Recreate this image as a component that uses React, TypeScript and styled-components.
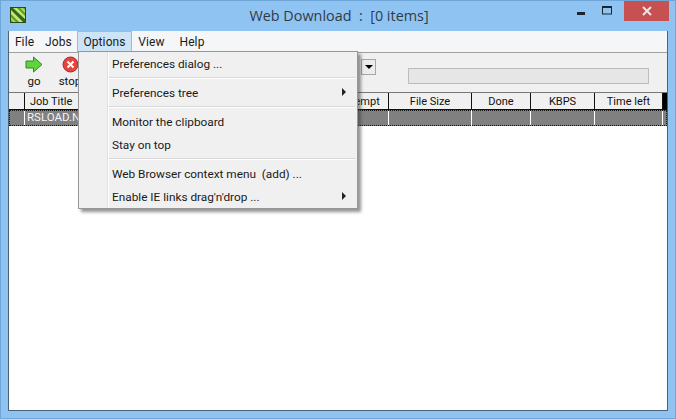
import React from "react";
import styled, { createGlobalStyle } from "styled-components";

const Global = createGlobalStyle`
  html, body { margin: 0; padding: 0; width: 676px; height: 419px; overflow: hidden; }
  body { font-family: "Liberation Sans", Arial, sans-serif; font-size: 12px; color: #000; }
`;
const Frame = styled.div`
  position: relative; width: 676px; height: 419px; box-sizing: border-box; background: #8fc4f2;
  border: 1px solid #6ea6d8; display: flex; flex-direction: column; overflow: hidden;
`;
const TitleBar = styled.div`
  height: 30px; display: flex; align-items: flex-start; flex: none; position: relative;
`;
const AppIcon = styled.svg`
  width: 16px; height: 16px; margin: 6px 0 0 9px; flex: none;
`;
const Title = styled.div`
  position: absolute; left: 2px; right: 0; top: 7px; text-align: center; font-family: "Open Sans", sans-serif;
  font-size: 14.4px; color: #2f3c48; white-space: pre; line-height: 16px;
`;
const WinControls = styled.div`
  margin-left: auto; display: flex; align-items: flex-start; height: 20px; margin-right: 6px;
  position: relative;
`;
const WinBtn = styled.div`
  width: 26px; height: 20px; display: flex; align-items: center; justify-content: center;
`;
const CloseBtn = styled.div`
  width: 45px; height: 20px; background: #c75050; display: flex; align-items: center; justify-content: center;
  margin-left: 4px;
`;
const Client = styled.div`
  flex: none; margin: 0 7px; height: 380px; background: #fff; display: flex; flex-direction: column;
  border: 1px solid #4d6478; border-top: none; box-sizing: border-box;
`;
const MenuBar = styled.div`
  height: 21px; background: #f5f6f7; display: flex; align-items: stretch; flex: none;
  border-bottom: 1px solid #a0a0a0; box-sizing: content-box;
`;
const MenuItem = styled.div<{ $active?: boolean; $w: number }>`
  width: ${p => p.$w}px; display: flex; align-items: center; justify-content: center; box-sizing: border-box;
  font-family: Roboto, sans-serif; font-size: 12px; letter-spacing: 0.1px; color: #1a1a1a;
  ${p => p.$active ? "background: #cde4f7; border: 1px solid #92c0e0;" : ""}
`;
const Toolbar = styled.div`
  height: 39px; background: #f0f0f0; display: flex; flex: none; position: relative; align-items: flex-start;
  padding-left: 7px; box-sizing: border-box;
`;
const ToolBtn = styled.div`
  width: 36px; display: flex; flex-direction: column; align-items: center; padding-top: 3px;
  font-family: Roboto, sans-serif; font-size: 11.5px; line-height: 14px; color: #111;
  svg { display: block; margin-bottom: 1px; }
`;
const Combo = styled.div`
  width: 15px; height: 16px; margin: 6px 0 0 273px; border: 1px solid #a6a6a6; background: #ececec; box-sizing: border-box;
  display: flex; align-items: center; justify-content: center; flex: none;
`;
const ComboArrow = styled.div`
  width: 0; height: 0; border-left: 4px solid transparent; border-right: 4px solid transparent; border-top: 4px solid #000;
`;
const Progress = styled.div`
  width: 241px; height: 16px; margin: 15px 0 0 32px; background: #e6e6e6; border: 1px solid #bcbcbc; box-sizing: border-box; flex: none;
`;
const Columns = "16px 307px 57px 83px 59px 64px 68px 1fr";
const Header = styled.div`
  display: grid; grid-template-columns: ${Columns}; height: 18px; flex: none; background: #f0f0f0;
  border-top: 1px solid #777; box-sizing: border-box;
`;
const HeadCell = styled.div<{ $left?: boolean }>`
  border-right: 1px solid #111; border-bottom: 1px solid #111; display: flex; align-items: center;
  justify-content: ${p => p.$left ? "flex-start" : "center"}; ${p => p.$left ? "padding-left: 5px;" : ""}
  font-family: Roboto, sans-serif; font-size: 11px; color: #111; overflow: hidden; white-space: nowrap;
`;
const HeadEnd = styled.div`
  background: #000;
`;
const Row = styled.div`
  display: grid; grid-template-columns: ${Columns}; height: 16px; flex: none; background: #808080;
  outline: 1px dotted #111; outline-offset: -1px;
`;
const RowCell = styled.div`
  border-right: 1px solid #fff; color: #f4f4f4; font-family: Roboto, sans-serif; font-size: 11.5px; line-height: 15px;
  padding-left: 2px; overflow: hidden; white-space: nowrap;
`;
const RowEnd = styled.div``;
const Menu = styled.div`
  position: absolute; left: 77px; top: 50px; width: 280px; height: 158px; box-sizing: border-box;
  background: #f0f0f0; border: 1px solid #979797; box-shadow: 3px 3px 3px rgba(60,60,60,.55);
  display: flex; flex-direction: column; z-index: 5;
  &::before { content: ""; position: absolute; left: 28px; top: 0; bottom: 0; width: 1px; background: #e0e0e0; border-right: 1px solid #fff; }
`;
const MItem = styled.div`
  height: 23px; flex: none; display: flex; align-items: center; padding-left: 33px; position: relative;
  font-family: Roboto, sans-serif; font-size: 11.8px; color: #1a1a1a; white-space: pre;
`;
const Sep = styled.div`
  height: 1px; margin: 2px 2px 2px 30px; background: #d7d7d7; border-bottom: 1px solid #fff; flex: none;
`;
const Arrow = styled.div`
  position: absolute; right: 11px; top: 7px; width: 0; height: 0;
  border-top: 4px solid transparent; border-bottom: 4px solid transparent; border-left: 4px solid #222;
`;

export default function App() {
  return (
    <Frame>
      <Global />
      <TitleBar>
        <AppIcon viewBox="0 0 16 16">
          <rect width="16" height="16" fill="#5c9e1e" />
          <path d="M0 3 L3 0 H6 L16 10 V13 L13 16 H10 L0 6Z" fill="#c4e67a" />
          <path d="M0 0 H2 L16 13 V16 H14 L0 2Z" fill="#2f6b10" />
          <path d="M9 0 H12 L16 4 V7Z" fill="#a6d95a" />
          <path d="M0 9 L7 16 H4 L0 12Z" fill="#a6d95a" />
          <rect x=".5" y=".5" width="15" height="15" fill="none" stroke="#2d4a18" />
        </AppIcon>
        <Title>Web Download  :  [0 items]</Title>
        <WinControls>
          <WinBtn>
            <svg width="10" height="10" viewBox="0 0 10 10"><rect x="1" y="6" width="8" height="3" fill="#1c2630" /></svg>
          </WinBtn>
          <WinBtn>
            <svg width="11" height="10" viewBox="0 0 11 10"><rect x=".5" y="1" width="9" height="7" fill="none" stroke="#1c2630" /><rect x="0" y="0" width="10" height="2" fill="#1c2630" /></svg>
          </WinBtn>
          <CloseBtn>
            <svg width="10" height="10" viewBox="0 0 10 10"><path d="M1 1 L9 9 M9 1 L1 9" stroke="#f4e4e4" strokeWidth="2" /></svg>
          </CloseBtn>
        </WinControls>
      </TitleBar>
      <Client>
        <MenuBar>
          <MenuItem $w={31}>File</MenuItem>
          <MenuItem $w={37}>Jobs</MenuItem>
          <MenuItem $w={55} $active>Options</MenuItem>
          <MenuItem $w={39}>View</MenuItem>
          <MenuItem $w={42}>Help</MenuItem>
        </MenuBar>
        <Toolbar>
          <ToolBtn>
            <svg width="18" height="17" viewBox="0 0 18 17">
              <path d="M1 5 H8.5 V1 L17 8.5 L8.5 16 V12 H1Z" fill="#5fd43c" stroke="#2f8a2a" strokeLinejoin="round" />
            </svg>
            go
          </ToolBtn>
          <ToolBtn>
            <svg width="17" height="17" viewBox="0 0 17 17">
              <circle cx="8.5" cy="8.5" r="7.5" fill="#e5453a" stroke="#a52a2a" />
              <path d="M5.5 5.5 L11.5 11.5 M11.5 5.5 L5.5 11.5" stroke="#fff" strokeWidth="2" />
            </svg>
            stop
          </ToolBtn>
          <Combo><ComboArrow /></Combo>
          <Progress />
        </Toolbar>
        <Header>
          <HeadCell />
          <HeadCell $left>Job Title</HeadCell>
          <HeadCell>Attempt</HeadCell>
          <HeadCell>File Size</HeadCell>
          <HeadCell>Done</HeadCell>
          <HeadCell>KBPS</HeadCell>
          <HeadCell>Time left</HeadCell>
          <HeadEnd />
        </Header>
        <Row>
          <RowCell />
          <RowCell>RSLOAD.NET</RowCell>
          <RowCell />
          <RowCell />
          <RowCell />
          <RowCell />
          <RowCell />
          <RowEnd />
        </Row>
      </Client>
      <Menu>
        <MItem>Preferences dialog ...</MItem>
        <Sep />
        <MItem>Preferences tree<Arrow /></MItem>
        <Sep />
        <MItem>Monitor the clipboard</MItem>
        <MItem>Stay on top</MItem>
        <Sep />
        <MItem>Web Browser context menu  (add) ...</MItem>
        <MItem>Enable IE links drag'n'drop ...<Arrow /></MItem>
      </Menu>
    </Frame>
  );
}
